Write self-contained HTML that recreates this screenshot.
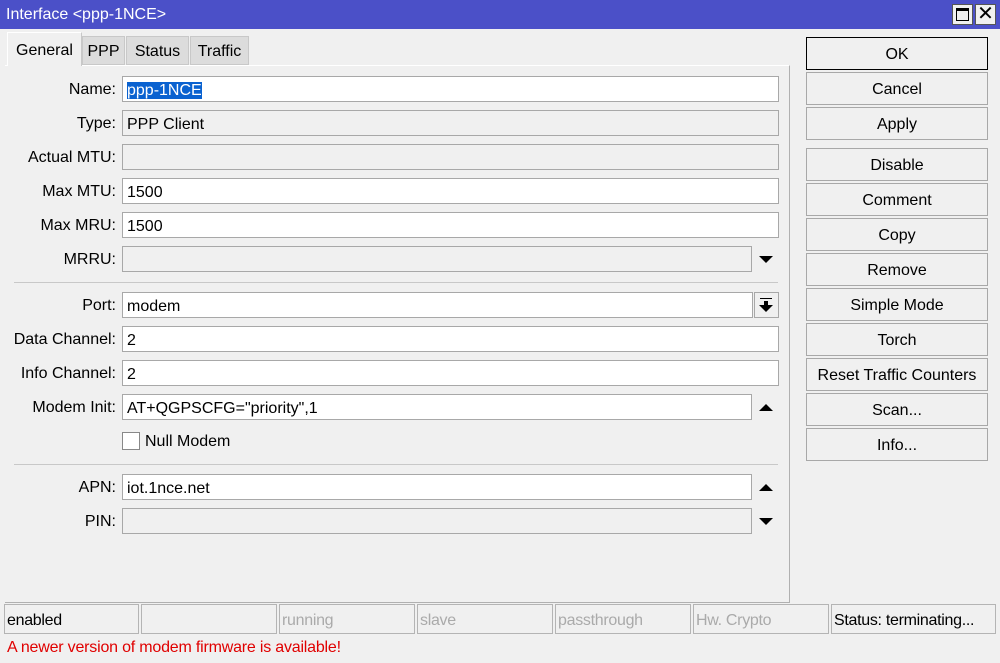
<!DOCTYPE html><html><head><style>
*{box-sizing:border-box}body{margin:0;width:1000px;height:663px;background:#f0f0f0;font-family:"Liberation Sans",sans-serif;font-size:16px;position:relative;overflow:hidden;color:#000}
.a{position:absolute}
.title{left:0;top:0;width:1000px;height:29px;background:#4b50c8;color:#fff;padding:6px 0 0 6px;font-size:16px}
.wb{top:4px;width:21px;height:21px;background:#f0f0f0;border:1px solid #555}
.tab{top:36px;height:29px;background:#dcdcdc;border:1px solid #c8c8c8;padding:6px 0 0 0;text-align:center}
.panel{left:5px;top:65px;width:785px;height:538px;border:1px solid #b0b0b0;border-top:1px solid #fff;border-left:none}
.lbl{width:116px;text-align:right;left:0}
.in{left:122px;height:26px;border:1px solid #a8a8a8;background:#fff;padding:5px 0 0 4px}
.ro{background:#f0f0f0}
.btn{left:806px;width:182px;height:33px;border:1px solid #a8a8a8;background:#f0f0f0;text-align:center;padding-top:8px}
.sep{left:14px;width:764px;height:1px;background:#c8c8c8}
.cell{top:604px;height:30px;border:1px solid #b4b4b4;padding:7px 0 0 2px;letter-spacing:-0.3px}
.tri{width:0;height:0;border-left:7px solid transparent;border-right:7px solid transparent}
</style></head><body>
<div class="a title">Interface &lt;ppp-1NCE&gt;</div>
<div class="a wb" style="left:952px"><div class="a" style="left:3px;top:3px;width:13px;height:13px;border:1px solid #000;border-top:3px solid #000"></div></div>
<div class="a wb" style="left:975px;font-size:20px;line-height:18px;text-align:center">✕</div>
<div class="a panel"></div>
<div class="a tab" style="left:7px;width:75px;top:32px;height:34px;background:#f0f0f0;border-bottom:none;border-color:#fff #c8c8c8 #f0f0f0 #fff;padding-top:9px">General</div>
<div class="a tab" style="left:82px;width:43px">PPP</div>
<div class="a tab" style="left:126px;width:63px">Status</div>
<div class="a tab" style="left:190px;width:59px">Traffic</div>

<div class="a lbl" style="top:81px">Name:</div><div class="a in" style="top:76px;width:657px"><span style="background:#0a62d0;color:#fff">ppp-1NCE</span></div>
<div class="a lbl" style="top:115px">Type:</div><div class="a in ro" style="top:110px;width:657px">PPP Client</div>
<div class="a lbl" style="top:149px">Actual MTU:</div><div class="a in ro" style="top:144px;width:657px"></div>
<div class="a lbl" style="top:183px">Max MTU:</div><div class="a in" style="top:178px;width:657px">1500</div>
<div class="a lbl" style="top:217px">Max MRU:</div><div class="a in" style="top:212px;width:657px">1500</div>
<div class="a lbl" style="top:251px">MRRU:</div><div class="a in ro" style="top:246px;width:630px"></div>
<div class="a tri" style="left:759px;top:256px;border-top:7px solid #000"></div>
<div class="a sep" style="top:282px"></div>
<div class="a lbl" style="top:297px">Port:</div><div class="a in" style="top:292px;width:631px">modem</div>
<div class="a" style="left:754px;top:292px;width:25px;height:26px;border:1px solid #a8a8a8"><div class="a" style="left:5px;top:5px;width:12px;height:1px;background:#000"></div><div class="a tri" style="left:4px;top:12px;border-top:7px solid #000;border-left-width:7px;border-right-width:7px"></div><div class="a" style="left:9px;top:8px;width:4px;height:5px;background:#000"></div></div>
<div class="a lbl" style="top:331px">Data Channel:</div><div class="a in" style="top:326px;width:657px">2</div>
<div class="a lbl" style="top:365px">Info Channel:</div><div class="a in" style="top:360px;width:657px">2</div>
<div class="a lbl" style="top:399px">Modem Init:</div><div class="a in" style="top:394px;width:630px">AT+QGPSCFG="priority",1</div>
<div class="a tri" style="left:759px;top:404px;border-bottom:7px solid #000"></div>
<div class="a" style="left:122px;top:432px;width:18px;height:18px;border:1px solid #888;background:#fff"></div>
<div class="a" style="left:145px;top:433px">Null Modem</div>
<div class="a sep" style="top:464px"></div>
<div class="a lbl" style="top:479px">APN:</div><div class="a in" style="top:474px;width:630px">iot.1nce.net</div>
<div class="a tri" style="left:759px;top:484px;border-bottom:7px solid #000"></div>
<div class="a lbl" style="top:513px">PIN:</div><div class="a in ro" style="top:508px;width:630px"></div>
<div class="a tri" style="left:759px;top:518px;border-top:7px solid #000"></div>

<div class="a btn" style="top:37px;border:1px solid #000">OK</div>
<div class="a btn" style="top:72px">Cancel</div>
<div class="a btn" style="top:107px">Apply</div>
<div class="a btn" style="top:148px">Disable</div>
<div class="a btn" style="top:183px">Comment</div>
<div class="a btn" style="top:218px">Copy</div>
<div class="a btn" style="top:253px">Remove</div>
<div class="a btn" style="top:288px">Simple Mode</div>
<div class="a btn" style="top:323px">Torch</div>
<div class="a btn" style="top:358px">Reset Traffic Counters</div>
<div class="a btn" style="top:393px">Scan...</div>
<div class="a btn" style="top:428px">Info...</div>

<div class="a cell" style="left:4px;width:135px">enabled</div>
<div class="a cell" style="left:141px;width:136px"></div>
<div class="a cell" style="left:279px;width:136px;color:#aaa">running</div>
<div class="a cell" style="left:417px;width:136px;color:#aaa">slave</div>
<div class="a cell" style="left:555px;width:136px;color:#aaa">passthrough</div>
<div class="a cell" style="left:693px;width:136px;color:#aaa">Hw. Crypto</div>
<div class="a cell" style="left:831px;width:165px">Status: terminating...</div>
<div class="a" style="left:7px;top:639px;color:#e00000;letter-spacing:-0.2px">A newer version of modem firmware is available!</div>
</body></html>
